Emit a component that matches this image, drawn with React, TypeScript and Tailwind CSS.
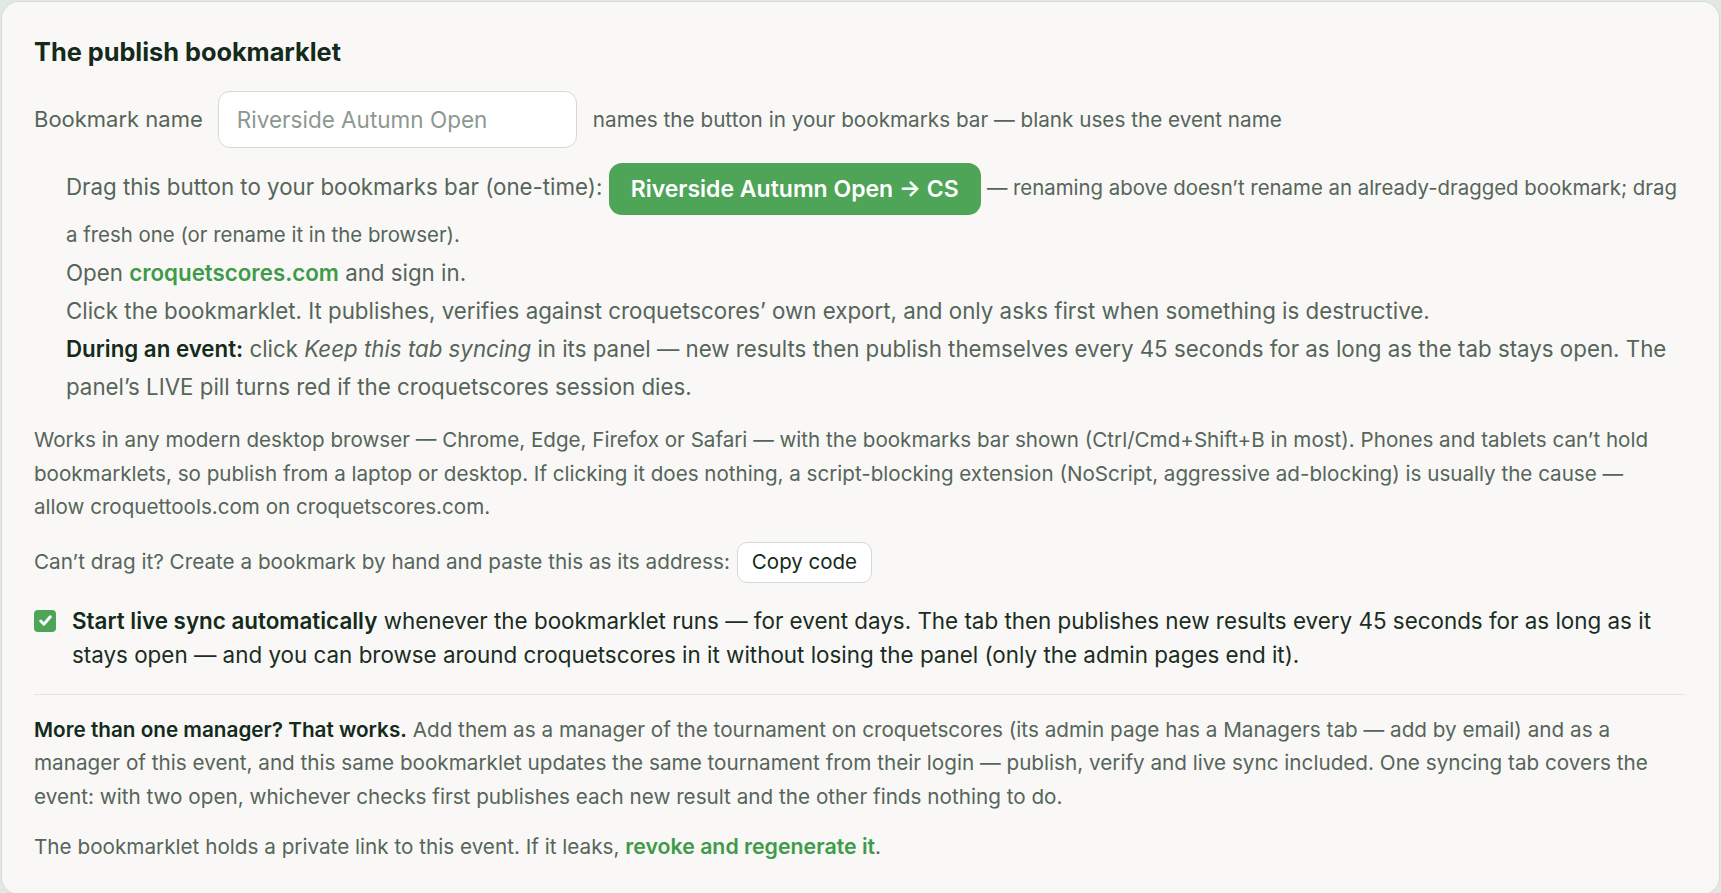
export default function App() {
  return (
    <div
      className="min-h-screen bg-[#e1e7e2] p-px text-[#56655a]"
      style={{ fontFamily: 'Inter, "Noto Sans", sans-serif' }}
    >
      <section className="min-h-[891px] rounded-[18px] border border-[#d6ddd7] bg-[#f9f8f6] pl-[32px] pr-[34px] pt-[33px] pb-[30px]">
        <h2 className="text-[25.3px] font-bold leading-[34px] text-[#142a1a]">The publish bookmarklet</h2>

        <div className="mt-[22px] flex items-center">
          <label className="text-[22px]">Bookmark name</label>
          <input
            className="ml-[15px] h-[57px] w-[359px] rounded-[12px] border border-[#d3dad4] bg-white px-[18px] text-[22.5px] text-[#142a1a] outline-none placeholder:text-[#8d988f]"
            placeholder="Riverside Autumn Open"
          />
          <span className="ml-[16px] text-[20.7px]">names the button in your bookmarks bar — blank uses the event name</span>
        </div>

        <ol className="mt-[15px] pl-[32px] text-[22.3px] leading-[38px]">
          <li>
            Drag this button to your bookmarks bar (one-time):{' '}
            <a className="inline-block rounded-[13px] bg-[#4ea457] px-[22px] align-middle text-[23px] font-semibold leading-[52px] text-white">
              Riverside Autumn Open → CS
            </a>{' '}
            <span className="text-[20.4px]">
              — renaming above doesn’t rename an already-dragged bookmark; drag a fresh one (or rename it in the browser).
            </span>
          </li>
          <li>
            Open <a className="font-semibold text-[#3f9a4a]">croquetscores.com</a> and sign in.
          </li>
          <li>Click the bookmarklet. It publishes, verifies against croquetscores’ own export, and only asks first when something is destructive.</li>
          <li>
            <strong className="font-semibold text-[#142a1a]">During an event:</strong> click <em>Keep this tab syncing</em> in its panel — new
            results then publish themselves every 45 seconds for as long as the tab stays open. The panel’s LIVE pill turns red if the
            croquetscores session dies.
          </li>
        </ol>

        <p className="mt-[17px] max-w-[1628px] text-[20.6px] leading-[33.5px]">
          Works in any modern desktop browser — Chrome, Edge, Firefox or Safari — with the bookmarks bar shown (Ctrl/Cmd+Shift+B in most).
          Phones and tablets can’t hold bookmarklets, so publish from a laptop or desktop. If clicking it does nothing, a script-blocking
          extension (NoScript, aggressive ad-blocking) is usually the cause — allow croquettools.com on croquetscores.com.
        </p>

        <div className="mt-[18px] flex items-center text-[20.7px]">
          <span>Can’t drag it? Create a bookmark by hand and paste this as its address:</span>
          <button className="ml-[7px] h-[41px] rounded-[10px] border border-[#d3dad4] bg-white px-[14px] text-[20.5px] text-[#142a1a]">Copy code</button>
        </div>

        <label className="mt-[21px] flex gap-[16px] text-[22.4px] leading-[34px] text-[#1a2d1f]">
          <span className="mt-[6px] flex h-[22px] w-[22px] shrink-0 items-center justify-center rounded-[4px] bg-[#4ea457]">
            <svg viewBox="0 0 16 16" className="h-[17px] w-[17px]" fill="none" stroke="white" strokeWidth="2.8" strokeLinecap="round" strokeLinejoin="round">
              <path d="M3.5 8.5l3 3 6-7" />
            </svg>
          </span>
          <span>
            <strong className="font-semibold text-[#142a1a]">Start live sync automatically</strong> whenever the bookmarklet runs — for event
            days. The tab then publishes new results every 45 seconds for as long as it stays open — and you can browse around croquetscores in
            it without losing the panel (only the admin pages end it).
          </span>
        </label>

        <hr className="mt-[22px] border-t border-[#e3e7e3]" />

        <p className="mt-[18px] text-[20.7px] leading-[33.5px]">
          <strong className="font-semibold text-[#142a1a]">More than one manager? That works.</strong> Add them as a manager of the tournament
          on croquetscores (its admin page has a Managers tab — add by email) and as a manager of this event, and this same bookmarklet
          updates the same tournament from their login — publish, verify and live sync included. One syncing tab covers the event: with two
          open, whichever checks first publishes each new result and the other finds nothing to do.
        </p>

        <p className="mt-[17px] text-[20.7px] leading-[33.5px]">
          The bookmarklet holds a private link to this event. If it leaks,{' '}
          <a className="text-[21.3px] font-semibold text-[#3f9a4a]">revoke and regenerate it</a>.
        </p>
      </section>
    </div>
  )
}
